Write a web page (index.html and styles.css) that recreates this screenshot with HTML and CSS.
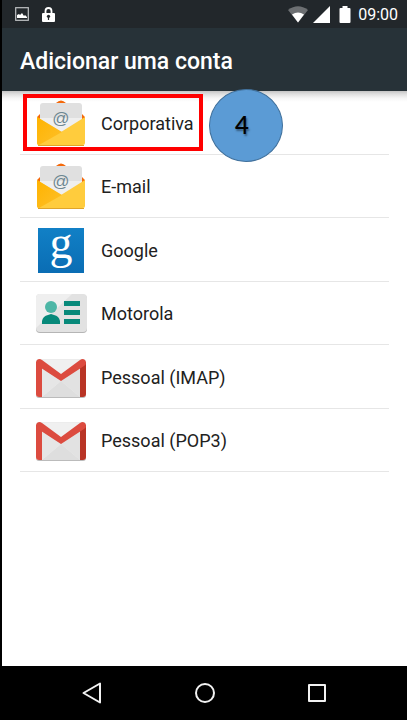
FILE: index.html
```html
<!DOCTYPE html>
<html lang="pt-BR">
<head>
<meta charset="utf-8">
<meta name="viewport" content="width=device-width, initial-scale=1">
<title>Adicionar uma conta</title>
<link rel="stylesheet" href="styles.css">
</head>
<body>
<svg class="defs" aria-hidden="true">
  <defs>
    <linearGradient id="blue" x1="0" y1="0" x2="0" y2="1"><stop offset="0" stop-color="#1180c6"/><stop offset="1" stop-color="#0a6db4"/></linearGradient>
    <linearGradient id="flap" x1="0" y1="0" x2="1" y2="1"><stop offset="0" stop-color="#ffb300"/><stop offset="1" stop-color="#fdc02a"/></linearGradient>
    <symbol id="mail" viewBox="0 0 52 48">
      <path d="M2 17 5 14 21 3Q26-2 31 3L47 14 50 17V24H2Z" fill="#f4690b"/>
      <path d="M5 6Q5 3 8 3H44Q47 3 47 6V36H5Z" fill="#e0e0e0"/>
      <path d="M5 18H47V36H5Z" fill="#efefef"/>
      <text class="at" x="26" y="24" text-anchor="middle">@</text>
      <path d="M2 17 26 32 50 17V43Q50 45 48 45H4Q2 45 2 43Z" fill="#ffcc3d"/>
      <path d="M2 17 27 32 4 45Q2 45 2 43Z" fill="url(#flap)"/>
      <path d="M3 45.500H49" stroke="#e0a52a" stroke-width="1"/>
    </symbol>
    <symbol id="gmail" viewBox="0 0 52 48">
      <rect x="1" y="6" width="50" height="38" rx="3" fill="#bbb"/>
      <rect x="1" y="5" width="50" height="38" rx="3" fill="#ececec"/>
      <path d="M7 43 26 27 45 43Z" fill="#dedede"/>
      <path d="M7 12 26 27 7 43Z" fill="#e6e6e6"/>
      <path d="M45 12 26 27 45 43Z" fill="#e2e2e2"/>
      <path d="M7 6H45L26 20Z" fill="#f0f0f0"/>
      <path d="M1 8H7V43H4Q1 43 1 40Z" fill="#dc4b3f"/>
      <path d="M45 8H51V40Q51 43 48 43H45Z" fill="#b93425"/>
      <path d="M1 9Q1 5 5 5L7 6 26 20 45 6 47 5Q51 5 51 9 51 11 49 12L26 27 3 12Q1 11 1 9Z" fill="#dc4b3f"/>
    </symbol>
  </defs>
</svg>
<div class="screen">
  <div class="status">
    <svg class="s-image" viewBox="0 0 14 14" aria-hidden="true"><rect x=".7" y=".7" width="12.600" height="12.600" fill="none" stroke="#bfc2c4" stroke-width="1.200"/><path d="M2 11V8L4 7 5 8 7 6 9 9 10 8 12 10V11Z" fill="#fff"/></svg>
    <svg class="s-lock" viewBox="0 0 13 15" aria-hidden="true"><path d="M3.500 7V4a3 3 0 0 1 6 0V7" fill="none" stroke="#fff" stroke-width="1.800"/><rect x="0" y="6" width="13" height="9" rx="1" fill="#fff"/><circle cx="6.500" cy="9.300" r="1.600" fill="#22272b"/><path d="M5.900 10H7.100V13H5.900Z" fill="#22272b"/></svg>
    <span class="spacer"></span>
    <svg class="s-wifi" viewBox="0 0 20 17" aria-hidden="true"><path d="M0 4Q10-3.500 20 4L10 16.500Z" fill="#6c6f72"/><path d="M4 8.500Q10 4.500 16 8.500L10 16.500Z" fill="#fff"/></svg>
    <svg class="s-signal" viewBox="0 0 17 17" aria-hidden="true"><path d="M17 0V17H0Z" fill="#fff"/></svg>
    <svg class="s-battery" viewBox="0 0 12 17" aria-hidden="true"><path d="M3.500 0H8.500V2H10.500Q11.500 2 11.500 3V16Q11.500 17 10.500 17H1.500Q.5 17 .5 16V3Q.5 2 1.500 2H3.500Z" fill="#fff"/></svg>
    <time class="time">09:00</time>
  </div>
  <header class="bar"><h1>Adicionar uma conta</h1></header>
  <main class="content">
    <ul class="accounts">
      <li><button class="account marked" type="button"><svg class="icon" aria-hidden="true"><use href="#mail"/></svg>Corporativa</button><span class="step">4</span></li>
      <li><button class="account" type="button"><svg class="icon" aria-hidden="true"><use href="#mail"/></svg>E-mail</button></li>
      <li><button class="account" type="button"><svg class="icon" viewBox="0 0 52 48" aria-hidden="true"><rect x="3" y="1" width="46" height="45" fill="url(#blue)"/><text class="g" x="26" y="31" text-anchor="middle">g</text></svg>Google</button></li>
      <li><button class="account" type="button"><svg class="icon" viewBox="0 0 52 48" aria-hidden="true">
        <rect x="1" y="5" width="51" height="38" rx="4" fill="#b5b5b5"/><rect x="1" y="4" width="51" height="38" rx="4" fill="#e2e2e2"/><path d="M5 4H37L1 38V8Q1 4 5 4Z" fill="#efefef"/>
        <circle cx="16" cy="17" r="6" fill="#4db6a6"/><path d="M7 34V31Q8 26 13 25L16 24 19 25Q24 26 25 31V34Z" fill="#07897a"/>
        <path d="M29 11H45V16H29ZM29 20H45V25H29ZM29 29H45V34H29Z" fill="#07897a"/></svg>Motorola</button></li>
      <li><button class="account" type="button"><svg class="icon" aria-hidden="true"><use href="#gmail"/></svg>Pessoal (IMAP)</button></li>
      <li><button class="account" type="button"><svg class="icon" aria-hidden="true"><use href="#gmail"/></svg>Pessoal (POP3)</button></li>
    </ul>
  </main>
  <nav class="nav">
    <button type="button" aria-label="Voltar"><svg viewBox="0 0 24 24"><path d="M2.500 12 19 2.500V21.500Z"/></svg></button>
    <button type="button" aria-label="Início"><svg viewBox="0 0 24 24"><circle cx="12" cy="12" r="9"/></svg></button>
    <button type="button" aria-label="Recentes"><svg viewBox="0 0 24 24"><rect x="4" y="4" width="16" height="16"/></svg></button>
  </nav>
</div>
</body>
</html>
```
FILE: styles.css
```css
*, *::before, *::after { box-sizing: border-box; }
body {
  margin: 0;
  background: #fff;
  color: #212121;
  font-family: Roboto, "Liberation Sans", sans-serif;
}
svg { display: block; flex: none; }
button { border: 0; padding: 0; background: none; color: inherit; font: inherit; cursor: pointer; }
.defs { position: absolute; width: 0; height: 0; }
.screen {
  display: flex;
  flex-direction: column;
  min-height: 100vh;
  border-left: 2px solid #000;
}
.status {
  display: flex;
  align-items: center;
  height: 28px;
  padding: 0 9px 0 13px;
  background: #22272b;
  color: #fff;
}
.s-image { width: 14px; height: 14px; margin-right: 13px; }
.s-lock { width: 13px; height: 15px; }
.spacer { flex: 1; }
.s-wifi { width: 20px; height: 17px; margin-right: 5px; }
.s-signal { width: 17px; height: 17px; margin-right: 9px; }
.s-battery { width: 12px; height: 17px; margin-right: 7px; }
.time { padding-top: 2px; font-size: 16px; line-height: 26px; }
.bar {
  display: flex;
  align-items: center;
  min-height: 63px;
  padding: 4px 18px 0;
  background: #273238;
  color: #fff;
}
h1 { margin: 0; font-size: 23px; font-weight: 500; line-height: 28px; }
.content {
  flex: 1;
  padding: 0 18px;
  background: linear-gradient(#c4c4c4, #dedede 3px, #f5f5f5 7px, #fff 11px) no-repeat;
}
.accounts { margin: 0; padding: 0; list-style: none; }
.accounts li { position: relative; height: 64px; border-bottom: 1px solid #e6e6e6; }
.accounts li:nth-child(even) { height: 63px; }
.account {
  display: flex;
  align-items: center;
  gap: 14px;
  width: 100%;
  height: 100%;
  padding: 2px 0 0 15px;
  font-size: 18px;
  line-height: 24px;
  text-align: left;
}
.icon { width: 52px; height: 48px; overflow: visible; }
.at { fill: #6d8791; font: 400 17px "Liberation Sans", sans-serif; }
.g { fill: #fff; font: 46px "Liberation Serif", serif; }
.marked::after {
  content: "";
  position: absolute;
  top: 3px;
  left: 3px;
  width: 180px;
  height: 57px;
  border: 4px solid #f00;
}
.step {
  position: absolute;
  top: -2px;
  left: 189px;
  width: 74px;
  height: 73px;
  padding-right: 8px;
  border: 1px solid #41719c;
  border-radius: 50%;
  background: #5b9bd5;
  color: #000;
  font: 600 24px/69px Lato, sans-serif;
  text-align: center;
  text-shadow: 1px 2px 2px rgba(0, 0, 0, 0.4);
  z-index: 1;
}
.nav {
  display: flex;
  align-items: center;
  justify-content: center;
  gap: 88px;
  height: 54px;
  background: #000;
}
.nav svg { width: 24px; height: 24px; fill: none; stroke: #f2f2f2; stroke-width: 2; stroke-linejoin: round; }
```
